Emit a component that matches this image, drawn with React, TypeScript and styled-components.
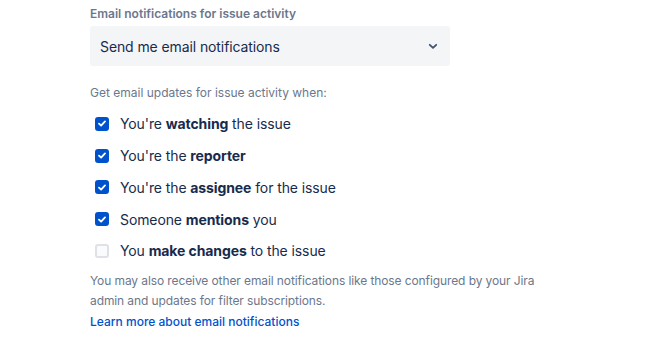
import { createGlobalStyle } from "styled-components";
import styled from "styled-components";

const GlobalStyle = createGlobalStyle`
  html, body {
    margin: 0;
    padding: 0;
    background: #ffffff;
  }
  body {
    font-family: Inter, "Noto Sans", sans-serif;
    -webkit-font-smoothing: antialiased;
  }
`;

const Page = styled.div`
  padding: 6px 0 0 90px;
  width: 360px;
`;

const FieldLabel = styled.label`
  display: block;
  font-size: 12px;
  line-height: 16px;
  font-weight: 600;
  color: #6b778c;
  margin-bottom: 4px;
`;

const Select = styled.div`
  display: flex;
  align-items: center;
  justify-content: space-between;
  height: 40px;
  box-sizing: border-box;
  padding: 0 12px 0 10px;
  background: #f4f5f7;
  border-radius: 3px;
  font-size: 14px;
  letter-spacing: -0.1px;
  color: #172b4d;
`;

const Hint = styled.p`
  margin: 19px 0 0;
  font-size: 12px;
  line-height: 16px;
  color: #6b778c;
`;

const List = styled.ul`
  list-style: none;
  margin: 7px 0 0;
  padding: 0;
`;

const Row = styled.li`
  display: flex;
  align-items: center;
  height: 31.75px;
  gap: 11px;
  padding-left: 5px;
  font-size: 14px;
  letter-spacing: -0.1px;
  color: #172b4d;
  white-space: nowrap;

  b {
    font-weight: 700;
  }
`;

const Box = styled.span<{ $checked: boolean }>`
  display: inline-flex;
  align-items: center;
  justify-content: center;
  width: 14px;
  height: 14px;
  box-sizing: border-box;
  border-radius: 3px;
  flex-shrink: 0;
  background: ${(p) => (p.$checked ? "#0052cc" : "#fafbfc")};
  border: 2px solid ${(p) => (p.$checked ? "#0052cc" : "#dfe1e6")};
`;

const Footer = styled.p`
  margin: 4px 0 0;
  width: 470px;
  font-size: 12px;
  line-height: 20px;
  letter-spacing: -0.1px;
  color: #6b778c;
`;

const Link = styled.a`
  display: block;
  margin-top: 1px;
  font-size: 12px;
  line-height: 20px;
  letter-spacing: 0;
  color: #0052cc;
  text-decoration: none;
  font-weight: 500;
`;

const Check = () => (
  <svg width="8" height="7" viewBox="0 0 8 7">
    <path d="M1 3.6 L3.1 5.6 L7 1.4" stroke="#fff" strokeWidth="1.8" fill="none" strokeLinecap="round" strokeLinejoin="round" />
  </svg>
);

const Chevron = () => (
  <svg width="10" height="7" viewBox="0 0 10 7">
    <path d="M1.8 1.8 L5 4.8 L8.2 1.8" stroke="#42526e" strokeWidth="1.8" fill="none" strokeLinecap="round" strokeLinejoin="round" />
  </svg>
);

const items: { checked: boolean; label: React.ReactNode }[] = [
  { checked: true, label: <>You're <b>watching</b> the issue</> },
  { checked: true, label: <>You're the <b>reporter</b></> },
  { checked: true, label: <>You're the <b>assignee</b> for the issue</> },
  { checked: true, label: <>Someone <b>mentions</b> you</> },
  { checked: false, label: <>You <b>make changes</b> to the issue</> },
];

export default function App() {
  return (
    <>
      <GlobalStyle />
      <Page>
        <FieldLabel>Email notifications for issue activity</FieldLabel>
        <Select>
          <span>Send me email notifications</span>
          <Chevron />
        </Select>
        <Hint>Get email updates for issue activity when:</Hint>
        <List>
          {items.map((it, i) => (
            <Row key={i}>
              <Box $checked={it.checked}>{it.checked && <Check />}</Box>
              <span>{it.label}</span>
            </Row>
          ))}
        </List>
        <Footer>
          You may also receive other email notifications like those configured by your Jira admin and
          updates for filter subscriptions.
          <Link href="#">Learn more about email notifications</Link>
        </Footer>
      </Page>
    </>
  );
}
